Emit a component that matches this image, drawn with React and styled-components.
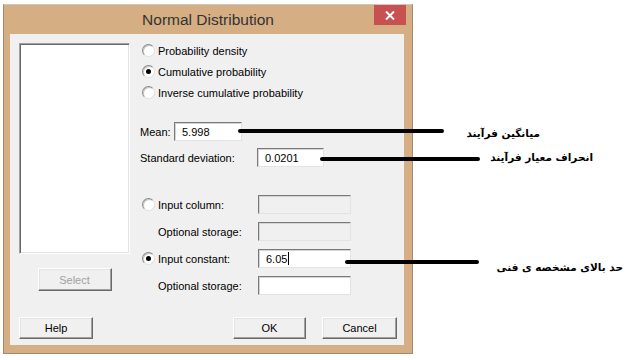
import styled, { createGlobalStyle } from "styled-components";

const GlobalStyle = createGlobalStyle`
    html, body {
        margin: 0;
        background: #fff;
    }
    body {
        font-family: "Liberation Sans", Arial, sans-serif;
        font-size: 11px;
        color: #000;
    }
`;

const StPage = styled.div`
    position: relative;
    width: 637px;
    height: 360px;
    padding: 4px 0 0 3px;
    box-sizing: border-box;
    overflow: hidden;
`;
const StWindow = styled.div`
    width: 410px;
    height: 350px;
    display: flex;
    flex-direction: column;
    box-sizing: border-box;
    background: #d5ae84;
    border: 1px solid #a4896b;
    border-top-color: #cdc6be;
`;
const StTitleBar = styled.div`
    height: 29px;
    display: grid;
    grid-template-columns: 1fr auto 1fr;
    padding: 0 6px 0 6px;
`;
const StTitle = styled.div`
    grid-column: 2;
    align-self: center;
    font-size: 15.5px;
    color: #333;
    padding-top: 1px;
`;
const StClose = styled.div`
    grid-column: 3;
    justify-self: end;
    width: 32px;
    height: 20px;
    background: #c75050;
    display: flex;
    align-items: center;
    justify-content: center;
`;
const StClient = styled.div`
    flex: 1;
    margin: 0 8px 8px 6px;
    background: #f0f0f0;
    display: flex;
    flex-direction: column;
`;
const StMain = styled.div`
    display: flex;
    padding: 6px 0 0 9px;
`;
const StLeftCol = styled.div`
    width: 111px;
    margin-top: 3px;
    display: flex;
    flex-direction: column;
    align-items: center;
`;
const StListBox = styled.div`
    width: 111px;
    height: 211px;
    box-sizing: border-box;
    background: #fff;
    border: 1px solid;
    border-color: #a0a0a0 #fff #fff #a0a0a0;
    box-shadow: inset 1px 1px #696969, inset -1px -1px #e3e3e3;
`;
const StRightCol = styled.div`
    margin-left: 10px;
    display: flex;
    flex-direction: column;
`;
const StRadioRow = styled.label`
    height: 21px;
    display: flex;
    align-items: center;
    gap: 3px;
    padding-left: 2px;
`;
const StRadio = styled.span`
    width: 13px;
    height: 13px;
    box-sizing: border-box;
    border-radius: 50%;
    background: #fff;
    border: 1px solid;
    border-color: #8a8a8a #e0e0e0 #e0e0e0 #8a8a8a;
    box-shadow: inset 1px 1px #c8c8c8;
    display: flex;
    align-items: center;
    justify-content: center;

    &::after {
        content: "";
        width: 5px;
        height: 5px;
        border-radius: 50%;
        background: ${({ $checked }) => ($checked ? "#000" : "transparent")};
    }
`;
const StFieldRow = styled.div`
    display: grid;
    grid-template-columns: ${({ $labelWidth }) => $labelWidth}px ${({ $inputWidth }) => $inputWidth}px;
    align-items: center;
    margin-top: ${({ $gap }) => $gap}px;
    height: 19px;
`;
const StFieldLabel = styled.span`
    display: flex;
    align-items: center;
    gap: 3px;
    padding-left: ${({ $indent }) => $indent}px;
`;
const StInput = styled.div`
    height: 19px;
    box-sizing: border-box;
    padding-left: 7px;
    display: flex;
    align-items: center;
    font-size: 11px;
    background: ${({ $disabled }) => ($disabled ? "#f0f0f0" : "#fff")};
    border: 1px solid;
    border-color: #7a7a7a #e3e3e3 #e3e3e3 #7a7a7a;
    box-shadow: inset 1px 1px #d4d4d4;
`;
const StCaret = styled.span`
    display: inline-block;
    width: 1px;
    height: 13px;
    background: #000;
    margin-left: 1px;
`;
const StButton = styled.div`
    width: ${({ $width }) => $width}px;
    height: ${({ $height }) => $height}px;
    box-sizing: border-box;
    background: #f0f0f0;
    display: flex;
    align-items: center;
    justify-content: center;
    font-size: 11px;
    color: ${({ $disabled }) => ($disabled ? "#a0a0a0" : "#000")};
    border: 1px solid;
    border-color: #fff #696969 #696969 #fff;
    box-shadow: inset -1px -1px #a0a0a0, inset 1px 1px #e3e3e3;
    margin-top: ${({ $top = 0 }) => $top}px;
`;
const StFooter = styled.div`
    margin-top: auto;
    display: flex;
    align-items: center;
    gap: 16px;
    padding: 0 7px 6px 9px;
`;
const StSpacer = styled.div`
    flex: 1;
`;
const StOverlay = styled.svg`
    position: absolute;
    left: 0;
    top: 0;
    pointer-events: none;
`;
const StNote = styled.div`
    position: absolute;
    right: ${({ $right }) => $right}px;
    top: ${({ $y }) => $y}px;
    direction: rtl;
    font-family: "DejaVu Sans", Tahoma, sans-serif;
    font-weight: bold;
    font-size: 10.5px;
    line-height: 14px;
    color: #000;
    white-space: nowrap;
`;

const probabilityOptions = [
    { label: "Probability density", checked: false },
    { label: "Cumulative probability", checked: true },
    { label: "Inverse cumulative probability", checked: false },
];

const notes = [
    { text: "میانگین فرآیند", right: 97, y: 126, line: [240, 131, 442, 131] },
    { text: "انحراف معیار فرآیند", right: 44, y: 150, line: [322, 159, 478, 159] },
    { text: "حد بالای مشخصه ی فنی", right: 14, y: 260, line: [347, 262, 477, 262] },
];

export default function App() {
    return (
        <StPage>
            <GlobalStyle />
            <StWindow>
                <StTitleBar>
                    <StTitle>Normal Distribution</StTitle>
                    <StClose>
                        <svg width="10" height="9" viewBox="0 0 10 9">
                            <path d="M1 0.5 L9 8.5 M9 0.5 L1 8.5" stroke="#fff" strokeWidth="2" />
                        </svg>
                    </StClose>
                </StTitleBar>
                <StClient>
                    <StMain>
                        <StLeftCol>
                            <StListBox />
                            <StButton $width={74} $height={23} $top={14} $disabled>
                                Select
                            </StButton>
                        </StLeftCol>
                        <StRightCol>
                            {probabilityOptions.map((el) => (
                                <StRadioRow key={el.label}>
                                    <StRadio $checked={el.checked} />
                                    {el.label}
                                </StRadioRow>
                            ))}
                            <StFieldRow $labelWidth={34} $inputWidth={68} $gap={19}>
                                <StFieldLabel>Mean:</StFieldLabel>
                                <StInput>5.998</StInput>
                            </StFieldRow>
                            <StFieldRow $labelWidth={117} $inputWidth={67} $gap={7}>
                                <StFieldLabel>Standard deviation:</StFieldLabel>
                                <StInput>0.0201</StInput>
                            </StFieldRow>
                            <StFieldRow $labelWidth={118} $inputWidth={93} $gap={28}>
                                <StFieldLabel $indent={2}>
                                    <StRadio />
                                    Input column:
                                </StFieldLabel>
                                <StInput $disabled />
                            </StFieldRow>
                            <StFieldRow $labelWidth={118} $inputWidth={93} $gap={8}>
                                <StFieldLabel $indent={18}>Optional storage:</StFieldLabel>
                                <StInput $disabled />
                            </StFieldRow>
                            <StFieldRow $labelWidth={118} $inputWidth={93} $gap={8}>
                                <StFieldLabel $indent={2}>
                                    <StRadio $checked />
                                    Input constant:
                                </StFieldLabel>
                                <StInput>
                                    6.05
                                    <StCaret />
                                </StInput>
                            </StFieldRow>
                            <StFieldRow $labelWidth={118} $inputWidth={93} $gap={8}>
                                <StFieldLabel $indent={18}>Optional storage:</StFieldLabel>
                                <StInput />
                            </StFieldRow>
                        </StRightCol>
                    </StMain>
                    <StFooter>
                        <StButton $width={74} $height={22}>Help</StButton>
                        <StSpacer />
                        <StButton $width={73} $height={22}>OK</StButton>
                        <StButton $width={75} $height={22}>Cancel</StButton>
                    </StFooter>
                </StClient>
            </StWindow>
            <StOverlay width="637" height="360">
                {notes.map((el) => (
                    <line
                        key={el.text}
                        x1={el.line[0]}
                        y1={el.line[1]}
                        x2={el.line[2]}
                        y2={el.line[3]}
                        stroke="#000"
                        strokeWidth="4"
                        strokeLinecap="round"
                    />
                ))}
            </StOverlay>
            {notes.map((el) => (
                <StNote key={el.text} $right={el.right} $y={el.y} dir="rtl">
                    {el.text}
                </StNote>
            ))}
        </StPage>
    );
}
